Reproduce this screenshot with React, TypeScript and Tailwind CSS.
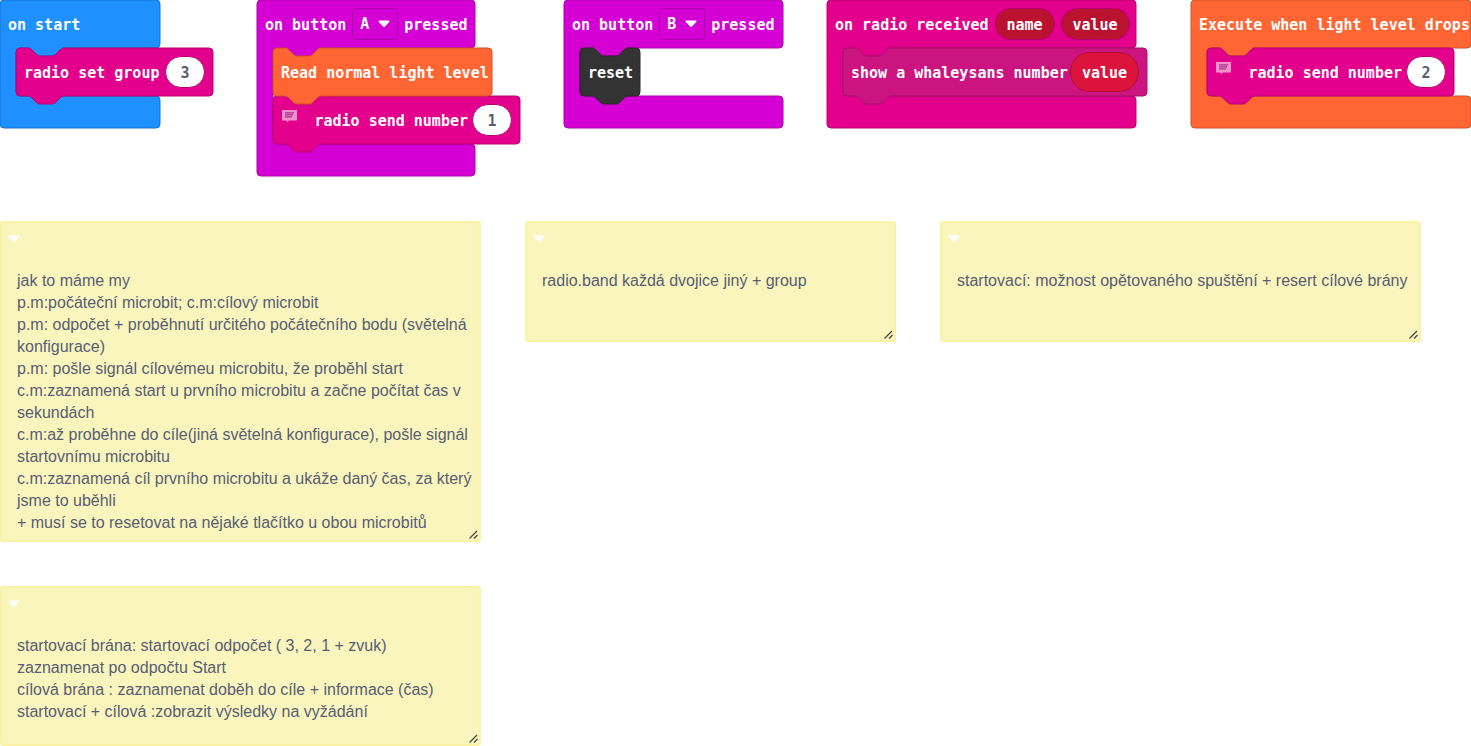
import React from "react";

const NOTCH = "c2 0 3 1 4 2l4 4c1 1 2 2 4 2h12c2 0 3 -1 4 -2l4 -4c1 -1 2 -2 4 -2";
const NOTCH_BACK = "c-2 0 -3 1 -4 2l-4 4c-1 1 -2 2 -4 2h-12c-2 0 -3 -1 -4 -2l-4 -4c-1 -1 -2 -2 -4 -2";

function statementPath(w: number) {
  return `M0 4a4 4 0 0 1 4 -4H12${NOTCH}H${w - 4}a4 4 0 0 1 4 4V44a4 4 0 0 1 -4 4H48${NOTCH_BACK}H4a4 4 0 0 1 -4 -4z`;
}

function hatPath(w: number, h: number) {
  const foot = h - 32;
  return `M0 4a4 4 0 0 1 4 -4H${w - 4}a4 4 0 0 1 4 4V44a4 4 0 0 1 -4 4H64${NOTCH_BACK}H20a4 4 0 0 0 -4 4V${foot - 4}a4 4 0 0 0 4 4H${w - 4}a4 4 0 0 1 4 4V${h - 4}a4 4 0 0 1 -4 4H4a4 4 0 0 1 -4 -4z`;
}

function Outline({ d, tone }: { d: string; tone: string }) {
  return (
    <svg aria-hidden="true" className={`absolute inset-0 size-full overflow-visible ${tone}`}>
      <path d={d} />
    </svg>
  );
}

const TONES = {
  blue: "fill-[#1e90ff] stroke-[#1873cc]",
  violet: "fill-[#d400d4] stroke-[#aa00aa]",
  pink: "fill-[#e3008c] stroke-[#b60070]",
  orange: "fill-[#ff6633] stroke-[#cc5229]",
  dark: "fill-[#333333] stroke-[#292929]",
  plum: "fill-[#cc1480] stroke-[#a31066]",
};
type Tone = keyof typeof TONES;

function Hat({ tone, w, h, header, children }: { tone: Tone; w: number; h: number; header: React.ReactNode; children: React.ReactNode }) {
  return (
    <section className="relative shrink-0">
      <Outline d={hatPath(w, h)} tone={TONES[tone]} />
      <div className="relative flex h-12 items-center gap-1.5 pl-2 whitespace-nowrap" style={{ width: w }}>
        {header}
      </div>
      <div className="relative flex flex-col items-start pb-8 pl-4">{children}</div>
    </section>
  );
}

function Statement({ tone, w, children }: { tone: Tone; w: number; children: React.ReactNode }) {
  return (
    <div className="relative h-12" style={{ width: w }}>
      <Outline d={statementPath(w)} tone={TONES[tone]} />
      <div className="relative flex h-12 items-center justify-between px-2 whitespace-nowrap">{children}</div>
    </div>
  );
}

function Label({ children }: { children: React.ReactNode }) {
  return <span className="pt-0.5">{children}</span>;
}

function Variable({ className, children }: { className: string; children: React.ReactNode }) {
  return <span className={`flex items-center justify-center rounded-full border pt-0.5 ${className}`}>{children}</span>;
}

function NumberField({ label, value }: { label: string; value: string }) {
  return (
    <input
      type="text"
      aria-label={label}
      defaultValue={value}
      className="h-8 w-10 rounded-full border border-[#b60070] bg-white pt-0.5 text-center text-[#575e75]"
    />
  );
}

function ButtonSelect({ value }: { value: string }) {
  return (
    <span className="relative flex">
      <select
        aria-label="button"
        defaultValue={value}
        className="h-8 w-[46px] appearance-none rounded border border-[#aa00aa] bg-[#d400d4] pl-[7px] text-white"
      >
        <option>A</option>
        <option>B</option>
      </select>
      <Caret className="pointer-events-none absolute top-3 right-2" />
    </span>
  );
}

function Caret({ className = "" }: { className?: string }) {
  return (
    <svg aria-hidden="true" viewBox="0 0 12 8" className={`h-2 w-3 fill-white ${className}`}>
      <path d="M1.5 .5H10.5C11.6 .5 11.8 1.4 11.2 2L7 6.6Q6 7.5 5 6.6L.8 2C.2 1.4 .4 .5 1.5 .5z" />
    </svg>
  );
}

function CommentIcon() {
  return (
    <button aria-label="Comment" className="mb-2 block">
      <svg aria-hidden="true" viewBox="0 0 16 13" className="h-[13px] w-4">
        <path d="M1 0H16V10.500H8L6.500 12L5 10.500H1z" fill="#f292cb" />
        <path d="M4 2H13V4H12V6H11V8H4z" fill="#d05fae" />
        <path d="M4 2.500H13M4 4.500H12M4 6.500H11" stroke="#b8479f" strokeWidth="1" />
      </svg>
    </button>
  );
}

function Note({ size, text }: { size: string; text: string }) {
  return (
    <section className={`relative flex shrink-0 flex-col rounded-[3px] border-2 border-[#faf2a4] bg-[#faf5bd] ${size}`}>
      <button aria-label="Collapse note" className="flex h-[47px] w-8 items-start pt-3 pl-[6px]">
        <Caret />
      </button>
      <textarea
        aria-label="Note"
        defaultValue={text}
        className="block w-full flex-1 resize-none overflow-hidden bg-transparent pr-1 pl-[15px] text-base leading-[22px] text-[#575e75] outline-none"
      />
      <svg aria-hidden="true" viewBox="0 0 9 9" className="absolute right-[1px] bottom-[1px] size-[9px] stroke-[#444444]">
        <path d="M.5 8.500L8 1M5 8.500L8.500 5" fill="none" strokeWidth="1.200" />
      </svg>
    </section>
  );
}

const NOTE_PLAN = `jak to máme my
p.m:počáteční microbit; c.m:cílový microbit
p.m: odpočet + proběhnutí určitého počátečního bodu (světelná konfigurace)
p.m: pošle signál cílovémeu microbitu, že proběhl start
c.m:zaznamená start u prvního microbitu a začne počítat čas v sekundách
c.m:až proběhne do cíle(jiná světelná konfigurace), pošle signál startovnímu microbitu
c.m:zaznamená cíl prvního microbitu a ukáže daný čas, za který jsme to uběhli
+ musí se to resetovat na nějaké tlačítko u obou microbitů`;

const NOTE_GATES = `startovací brána: startovací odpočet ( 3, 2, 1 + zvuk)
zaznamenat po odpočtu Start
cílová brána : zaznamenat doběh do cíle + informace (čas)
startovací + cílová :zobrazit výsledky na vyžádání`;

export default function App() {
  return (
    <main className="flex flex-col gap-11 overflow-hidden bg-white font-['Liberation_Sans',sans-serif]">
      <div className="flex items-start gap-11 pb-px font-['DejaVu_Sans_Mono',monospace] text-[15px] leading-5 font-bold text-white">
        <Hat tone="blue" w={160} h={128} header={<Label>on start</Label>}>
          <Statement tone="pink" w={197}>
            <Label>radio set group</Label>
            <NumberField label="radio set group" value="3" />
          </Statement>
        </Hat>

        <Hat
          tone="violet"
          w={218}
          h={176}
          header={
            <>
              <Label>on button</Label>
              <ButtonSelect value="A" />
              <Label>pressed</Label>
            </>
          }
        >
          <div className="relative z-10">
            <Statement tone="orange" w={219}>
              <Label>Read normal light level</Label>
            </Statement>
          </div>
          <Statement tone="pink" w={247}>
            <CommentIcon />
            <span className="ml-auto pt-0.5 pr-1">radio send number</span>
            <NumberField label="radio send number" value="1" />
          </Statement>
        </Hat>

        <Hat
          tone="violet"
          w={219}
          h={128}
          header={
            <>
              <Label>on button</Label>
              <ButtonSelect value="B" />
              <Label>pressed</Label>
            </>
          }
        >
          <Statement tone="dark" w={60}>
            <Label>reset</Label>
          </Statement>
        </Hat>

        <Hat
          tone="pink"
          w={309}
          h={128}
          header={
            <>
              <Label>on radio received</Label>
              <Variable className="h-8 w-[60px] border-[#b60070] bg-[#ba122f]">name</Variable>
              <Variable className="h-8 w-[69px] border-[#b60070] bg-[#ba122f]">value</Variable>
            </>
          }
        >
          <Statement tone="plum" w={304}>
            <Label>show a whaleysans number</Label>
            <Variable className="h-10 w-[69px] border-[#b01030] bg-[#dc143c]">value</Variable>
          </Statement>
        </Hat>

        <Hat tone="orange" w={280} h={128} header={<Label>Execute when light level drops</Label>}>
          <Statement tone="pink" w={247}>
            <CommentIcon />
            <span className="ml-auto pt-0.5 pr-1">radio send number</span>
            <NumberField label="radio send number" value="2" />
          </Statement>
        </Hat>
      </div>

      <div className="flex items-start gap-11">
        <Note size="w-[481px] min-h-[321px]" text={NOTE_PLAN} />
        <Note size="w-[371px] min-h-[121px]" text="radio.band každá dvojice jiný + group" />
        <Note size="w-[481px] min-h-[121px]" text="startovací: možnost opětovaného spuštění + resert cílové brány" />
      </div>

      <Note size="w-[481px] min-h-40" text={NOTE_GATES} />
    </main>
  );
}
